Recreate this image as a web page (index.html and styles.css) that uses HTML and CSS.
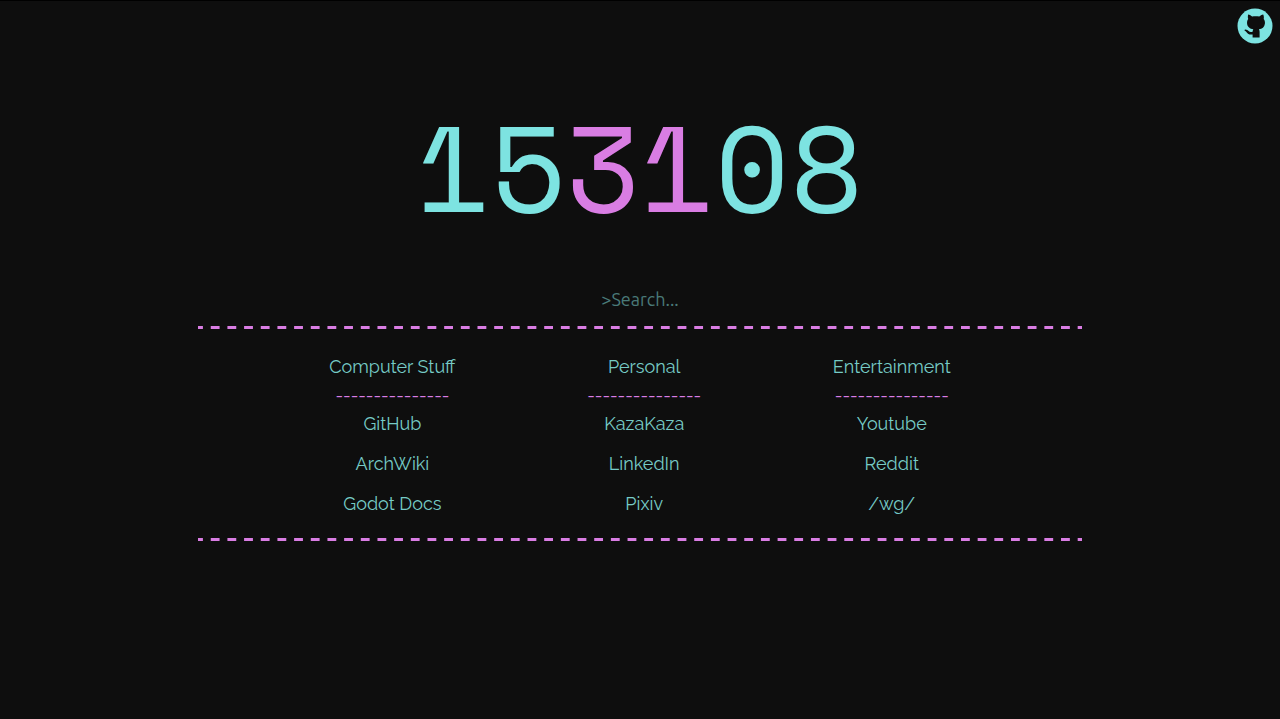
FILE: index.html
```html
<!DOCTYPE html>
<html lang="en">
<head>
<meta charset="utf-8">
<title>Startpage</title>
<meta name="viewport" content="width=device-width, initial-scale=1">
<link rel="stylesheet" href="styles.css">
</head>
<body>
<header class="top">
  <a class="repo" href="#" aria-label="GitHub repository">
    <svg class="repo-icon" viewBox="0 0 36 36" aria-hidden="true">
      <circle class="disc" cx="18" cy="18" r="17.5"/>
      <path class="cat" d="M11.200 6.500c1.500.2 3 1.200 4 2.100 2-.4 5-.4 7 0 1-.9 2.500-1.900 4-2.100.8 1.700.8 3.200.5 4.400 1.100 1.400 1.400 3.100 1.200 4.900-.5 3.500-2.700 5-6 5.500.5.700.7 1.500.7 2.500v5.700h-7v-3.100c-3.200.5-4.900-.6-5.800-2-.5-.8-1.100-1.300-1.900-1.700-.6-.4-.5-1.300.4-1.300 1.500 0 2.500.8 3.300 1.700.9 1.100 2.300 1.200 4 .7.100-1 .2-1.800.7-2.500-3.300-.6-5.800-2-6.200-5.500-.2-1.900.1-3.500 1.100-4.900-.4-1.200-.5-2.700 0-4.400z"/>
    </svg>
  </a>
</header>
<main class="page">
  <time class="clock" datetime="15:31:08"><span>15</span><span class="minutes">31</span><span>08</span></time>
  <form class="search-form">
    <input class="search" type="text" name="q" placeholder="&gt;Search..." aria-label="Search" autocomplete="off">
  </form>
  <hr class="rule">
  <nav class="links">
    <section class="column">
      <h2 class="title">Computer Stuff</h2>
      <div class="dashes" aria-hidden="true">---------------</div>
      <ul class="list"><li><a href="#">GitHub</a></li><li><a href="#">ArchWiki</a></li><li><a href="#">Godot Docs</a></li></ul>
    </section>
    <section class="column">
      <h2 class="title">Personal</h2>
      <div class="dashes" aria-hidden="true">---------------</div>
      <ul class="list"><li><a href="#">KazaKaza</a></li><li><a href="#">LinkedIn</a></li><li><a href="#">Pixiv</a></li></ul>
    </section>
    <section class="column">
      <h2 class="title">Entertainment</h2>
      <div class="dashes" aria-hidden="true">---------------</div>
      <ul class="list"><li><a href="#">Youtube</a></li><li><a href="#">Reddit</a></li><li><a href="#">/wg/</a></li></ul>
    </section>
  </nav>
  <hr class="rule">
</main>
</body>
</html>
```
FILE: styles.css
```css
:root {
  --cyan: #7de3e1;
  --link: #76cbc6;
  --pink: #d97de3;
}
body {
  margin: 0;
  border-top: 1px solid #000;
  background: #0e0e0e;
  color: var(--link);
  font-family: Raleway, Lato, sans-serif;
  font-size: 18px;
  line-height: 24px;
}
.top {
  display: flex;
  justify-content: flex-end;
  padding: 7px 7px 0;
}
.repo {
  display: block;
  height: 36px;
}
.repo-icon {
  display: block;
  width: 36px;
  height: 36px;
}
.disc { fill: var(--cyan); }
.cat { fill: #0e0e0e; }
.page {
  display: flex;
  flex-direction: column;
  align-items: center;
  padding: 0 8px;
}
.clock {
  padding-top: 50px;
  color: var(--cyan);
  font-family: "Space Mono", "DejaVu Sans Mono", monospace;
  font-size: 122px;
  line-height: 144px;
}
.minutes { color: var(--pink); }
.search-form {
  width: 70%;
  padding-top: 49px;
}
.search {
  display: block;
  box-sizing: border-box;
  width: 100%;
  height: 24px;
  padding: 0;
  border: 0;
  outline: 0;
  background: transparent;
  color: var(--cyan);
  font-family: Ubuntu, "Noto Sans", sans-serif;
  font-size: 18px;
  text-align: center;
}
.search::placeholder {
  color: #4a7a79;
  opacity: 1;
}
.rule {
  width: 70%;
  height: 3px;
  margin: 15px 0 14px;
  border: 0;
  background: linear-gradient(to right, var(--pink) 5px, transparent 5px 13px, var(--pink) 13px) 0 0 / calc(100% / 53) 100%;
}
.links {
  display: flex;
  justify-content: space-evenly;
  width: 70%;
  padding: 12px 0 7px;
}
.column { text-align: center; }
.title {
  margin: 0;
  font-size: 18px;
  font-weight: 400;
}
.dashes {
  padding: 5px 0 4px;
  color: var(--pink);
}
.list {
  display: grid;
  gap: 16px;
  margin: 0;
  padding: 0;
  list-style: none;
}
.list a {
  color: inherit;
  text-decoration: none;
}
```
